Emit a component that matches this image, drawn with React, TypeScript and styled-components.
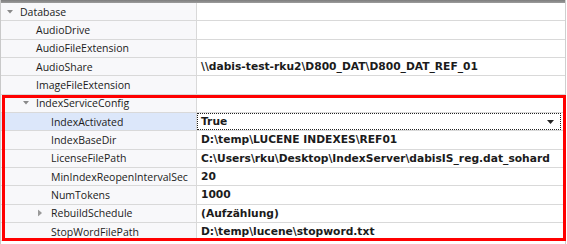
import React from "react";
import styled, { createGlobalStyle } from "styled-components";

const Global = createGlobalStyle`
  html, body { margin: 0; padding: 0; background: #ffffff; }
  body { font-family: "Open Sans", "Liberation Sans", sans-serif; }
`;

const Frame = styled.div`
  position: relative;
  width: 567px;
  height: 244px;
  overflow: hidden;
  background: #ffffff;
`;

const Grid = styled.div`
  width: 566px;
  height: 244px;
  box-sizing: border-box;
  border-left: 1px solid #c9c9c9;
  border-right: 1px solid #cfcfcf;
  display: flex;
  flex-direction: column;
`;

const TopBar = styled.div`
  height: 3px;
  flex: none;
  background: linear-gradient(#7d7d7d, #9c9c9c);
`;

const Row = styled.div`
  display: grid;
  grid-template-columns: 196px 1fr;
  height: 18.333px;
  flex: none;
  box-sizing: border-box;
  border-bottom: 1px solid #d9d9d9;
  color: #1b1b1b;
`;

const NameCell = styled.div<{ $level: number; $selected?: boolean }>`
  display: flex;
  align-items: center;
  position: relative;
  padding-left: ${(p) => p.$level}px;
  font-family: "Open Sans", "Liberation Sans", sans-serif;
  font-size: 10.5px;
  background: ${(p) => (p.$selected ? "#dce7fa" : "#f8f8fa")};
  border-right: 1px solid #d9d9d9;
  white-space: nowrap;
  overflow: hidden;
`;

const ValueCell = styled.div<{ $focused?: boolean }>`
  display: flex;
  align-items: center;
  justify-content: space-between;
  padding: 0 6px 0 3px;
  font-family: "DejaVu Sans", "Liberation Sans", sans-serif;
  font-size: 10.7px;
  font-weight: 700;
  white-space: nowrap;
  box-sizing: border-box;
  border: 1px dotted ${(p) => (p.$focused ? "#222" : "transparent")};
  margin-right: 4px;
`;

const Toggle = styled.svg`
  position: absolute;
  top: 50%;
  transform: translateY(-50%);
`;

const Arrow = styled.svg`
  flex: none;
`;

const Highlight = styled.div`
  position: absolute;
  left: 2px;
  top: 95px;
  width: 564px;
  height: 146px;
  box-sizing: border-box;
  border: 3px solid #ff0000;
  pointer-events: none;
`;

type Item = {
  name: string;
  value?: string;
  level: number;
  expanded?: boolean;
  collapsed?: boolean;
  selected?: boolean;
  dropdown?: boolean;
};

const items: Item[] = [
  { name: "Database", level: 19, expanded: true },
  { name: "AudioDrive", level: 35 },
  { name: "AudioFileExtension", level: 35 },
  { name: "AudioShare", level: 35, value: "\\\\dabis-test-rku2\\D800_DAT\\D800_DAT_REF_01" },
  { name: "ImageFileExtension", level: 35 },
  { name: "IndexServiceConfig", level: 35, expanded: true },
  { name: "IndexActivated", level: 50, value: "True", selected: true, dropdown: true },
  { name: "IndexBaseDir", level: 50, value: "D:\\temp\\LUCENE INDEXES\\REF01" },
  { name: "LicenseFilePath", level: 50, value: "C:\\Users\\rku\\Desktop\\IndexServer\\dabisIS_reg.dat_sohard" },
  { name: "MinIndexReopenIntervalSec", level: 50, value: "20" },
  { name: "NumTokens", level: 50, value: "1000" },
  { name: "RebuildSchedule", level: 50, value: "(Aufzählung)", collapsed: true },
  { name: "StopWordFilePath", level: 50, value: "D:\\temp\\lucene\\stopword.txt" },
];

export default function App() {
  return (
    <>
      <Global />
      <Frame>
        <Grid>
          <TopBar />
          {items.map((it) => (
            <Row key={it.name}>
              <NameCell $level={it.level} $selected={it.selected}>
                {it.expanded && (
                  <Toggle
                    width="6"
                    height="4"
                    viewBox="0 0 6 4"
                    style={{ left: it.level - 13 }}
                  >
                    <polygon points="0,0 6,0 3,3.5" fill="#8a8a8a" />
                  </Toggle>
                )}
                {it.collapsed && (
                  <Toggle
                    width="4"
                    height="7"
                    viewBox="0 0 4 7"
                    style={{ left: it.level - 13 }}
                  >
                    <polygon points="0,0 4,3.5 0,7" fill="#9a9a9a" />
                  </Toggle>
                )}
                {it.name}
              </NameCell>
              <ValueCell $focused={it.selected}>
                <span>{it.value ?? ""}</span>
                {it.dropdown && (
                  <Arrow width="7" height="4" viewBox="0 0 7 4">
                    <polygon points="0,0 7,0 3.5,4" fill="#222" />
                  </Arrow>
                )}
              </ValueCell>
            </Row>
          ))}
        </Grid>
        <Highlight />
      </Frame>
    </>
  );
}
